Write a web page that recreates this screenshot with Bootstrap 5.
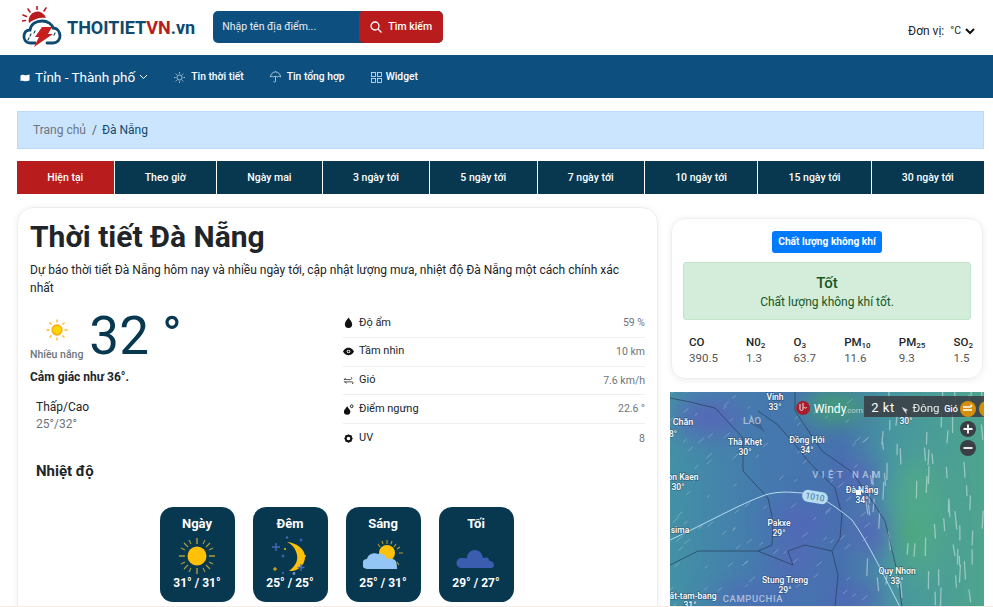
<!DOCTYPE html>
<html lang="vi">
<head>
  <meta charset="UTF-8">
  <meta name="viewport" content="width=device-width, initial-scale=1.0">
  <title>Thời tiết Đà Nẵng</title>
  <link rel="stylesheet" href="https://cdn.jsdelivr.net/npm/bootstrap@5.3.0/dist/css/bootstrap.min.css">
  <style>
    html, body { height: 100%; overflow: hidden; }
    body { font-family: Roboto, "Liberation Sans", sans-serif; font-size: 12px; color: #212529; background: #fff; }
    .top-head { height: 55px; padding: 6px 18px 0 22px; }
    .logo-text { font-size: 18px; font-weight: 700; color: #0e4a6e; margin-left: 5px; }
    .logo-text span { color: #b91c1c; }
    .search-box { width: 230px; height: 32px; margin: 5px 0 0 18px; border-radius: 5px; overflow: hidden; background: #0d5080; }
    .search-box input { flex: 1; min-width: 0; border: 0; background: transparent; padding: 0 9px; color: #fff; font-size: 10.5px; outline: 0; }
    .search-box input::placeholder { color: #e8eef3; opacity: 1; }
    .search-btn { width: 84px; background: #b91c1c; color: #fff; border: 0; font-size: 10.5px; font-weight: 500; border-radius: 5px; padding: 0; gap: 6px; }
    .unit-pick { font-size: 12px; margin-top: 16px; }
    .unit-pick .unit-val { font-size: 10.5px; margin-left: 6px; }
    .main-nav { background: #0d5080; height: 43px; padding: 1px 0 0 20px; }
    .main-nav a { color: #fff; text-decoration: none; font-size: 10.3px; font-weight: 500; }
    .main-nav .city-link { font-size: 13.5px; font-weight: 400; margin-right: 26px; }
    .main-nav .city-name { margin-left: 5px; }
    .main-nav .nav-gap { margin-right: 26px; }
    .main-nav .nav-ico { margin-right: 6px; }
    .crumb-bar { margin: 13px 9px 0 17px; height: 38px; background: #cce5ff; border: 1px solid #b8daff; padding: 0 15px; font-size: 12px; }
    .crumb-bar .breadcrumb-item a { color: #6c757d; text-decoration: none; }
    .crumb-bar .breadcrumb-item.active { color: #0e4a6e; }
    .crumb-bar .breadcrumb-item + .breadcrumb-item { padding-left: 6px; }
    .crumb-bar .breadcrumb-item + .breadcrumb-item::before { padding-right: 5px; }
    .day-tabs { margin: 12px 9px 0 17px; gap: 1px; height: 33px; }
    .day-tabs a { background: #07384f; color: #fff; text-decoration: none; font-size: 10.5px; font-weight: 500; flex: 1 1 auto; text-align: center; line-height: 33px; }
    .day-tabs a.on { background: #b91c1c; }
    .page-cols { margin: 13px 9px 0 17px; gap: 12px; align-items: flex-start; }
    .left-panel { width: 641px; flex: none; height: 500px; border: 1px solid #ededed; border-radius: 16px; padding: 12px; box-shadow: 0 0 6px rgba(0,0,0,.06); }
    .left-panel h1 { font-size: 30px; font-weight: 700; margin: 0; line-height: 34px; }
    .intro { font-size: 12px; line-height: 18px; margin: 7px 0 0; }
    .now-wrap { margin-top: 12px; }
    .now-col { width: 313px; flex: none; }
    .sun-now { margin-top: 9px; }
    .sky-name { font-size: 10.5px; font-weight: 500; color: #6c757d; line-height: 13px; margin-top: 6px; }
    .big-temp { font-size: 53px; line-height: 54px; color: #07384f; margin: 0 0 0 6px; }
    .feels { font-size: 12px; font-weight: 700; margin-top: 5px; }
    .low-high { margin: 13px 0 0 6px; font-size: 12px; line-height: 17px; }
    .low-high div + div { color: #6c757d; }
    .stat-list { width: 302px; }
    .stat-row { height: 28.75px; border-bottom: 1px solid #eee; font-size: 11px; }
    .stat-row:last-child { border-bottom: 0; }
    .stat-row svg { width: 11px; height: 11px; margin-right: 5px; }
    .stat-row .stat-val { color: #6c757d; font-size: 10.5px; }
    .temp-title { font-size: 15px; font-weight: 700; margin: 9px 0 0 6px; line-height: 18px; }
    .temp-wrap { gap: 18px; margin-top: 27px; padding-right: 2px; }
    .temp-box { width: 75px; height: 95px; background: #07384f; border-radius: 13px; color: #fff; font-weight: 700; font-size: 12px; padding-top: 7px; }
    .temp-box .temp-name { font-size: 13px; }
    .temp-box svg { width: 40px; height: 40px; display: block; margin: 3px auto -2px; }
    .right-col { width: 314px; flex: none; padding-top: 11px; }
    .air-box { margin: 0 1px; height: 161px; border: 1px solid #eee; border-radius: 14px; padding: 12px 11px; box-shadow: 0 1px 6px rgba(0,0,0,.08); }
    .air-tag { background: #007bff; font-size: 10.2px; font-weight: 700; border-radius: 3px; padding: 5px 6px; line-height: 12px; }
    .air-alert { background: #d4edda; border: 1px solid #c3e6cb; color: #155724; height: 58px; margin: 9px 0 0; padding: 10px 0 0; border-radius: 3px; font-size: 12px; line-height: 18px; }
    .air-alert b { display: block; font-size: 15px; font-weight: 500; line-height: 20px; }
    .air-nums { margin-top: 14px; padding: 0 0 0 6px; margin-right: -2px; justify-content: space-between; font-size: 11.5px; line-height: 16px; }
    .air-nums b { display: block; font-weight: 500; }
    .air-nums sub { font-size: 8px; bottom: -.3em; }
    .air-nums span { color: #555; }
    .wind-map { display: block; width: 314px; height: 215px; margin-top: 13px; }
    .wind-map text { font-family: Roboto, "Liberation Sans", sans-serif; font-size: 8.5px; font-weight: 500; fill: #fff; text-anchor: middle; paint-order: stroke; stroke: rgba(30,50,80,.4); stroke-width: 1.5px; }
    .wind-map .bar-text { stroke: none; font-weight: 400; }
    .wind-map .land-text { font-size: 9.5px; stroke: none; fill: rgba(255,255,255,.55); }
    .foot-strip { position: fixed; left: 0; right: 0; bottom: 0; height: 1px; background: #f7ebe6; }
  </style>
</head>
<body>
  <header class="top-head d-flex align-items-start">
    <div class="d-flex align-items-center">
      <svg width="40" height="42" viewBox="0 0 40 42" fill="none">
        <path d="M7 17A8.500 8.500 0 1 1 24 12C18 11 12 13 7 17Z" fill="#b91c1c"/>
        <path d="M15 0v3.500M6 3l2 3M24 2l-2 3M1 9l3.500 1.500M0 15l3.500-.5" stroke="#b91c1c" stroke-width="1.600" stroke-linecap="round"/>
        <path d="M13 37H8C3.500 37 1.500 33 2 29.500 2.500 26 5 24 8 24 9 18 14 15 20 15 26 15 30 18.500 31 22 35.500 22 38 26 38 30 38 34 35 37 31 37H25" stroke="#0e4a6e" stroke-width="2.800" stroke-linecap="round"/>
        <path d="M20 21h10l-4 7h5L12 41l5-10h-4z" fill="#c81e1e"/>
        <path d="M9 28l-1 2M13 25l-1 2M7 32l-1 2M33 27l-1 2" stroke="#0e4a6e" stroke-width="1.200" stroke-linecap="round"/>
      </svg>
      <span class="logo-text">THOITIET<span>VN</span>.vn</span>
    </div>
    <form class="search-box d-flex">
      <input type="text" placeholder="Nhập tên địa điểm...">
      <button type="button" class="search-btn d-flex align-items-center justify-content-center">
        <svg width="12" height="12" viewBox="0 0 12 12" fill="none" stroke="#fff" stroke-width="1.300"><circle cx="5" cy="5" r="4"/><path d="M8 8l3.500 3.500"/></svg>
        Tìm kiếm
      </button>
    </form>
    <div class="unit-pick ms-auto d-flex align-items-center">
      <span>Đơn vị:</span><span class="unit-val">°C</span>
      <svg class="ms-1" width="10" height="8" viewBox="0 0 10 8" fill="none" stroke="#111" stroke-width="2"><path d="M1 2l4 4 4-4"/></svg>
    </div>
  </header>

  <nav class="main-nav d-flex align-items-center">
    <a href="#" class="city-link d-flex align-items-center">
      <svg width="10" height="9" viewBox="0 0 10 9"><path d="M.5 2.500C2 1.500 3 1.500 4 2c2 .5 3 0 5.500-.5v6C7.500 8 6 8.500 4 8c-1.500-.5-2.500-.5-3.500 0z" fill="#fff"/></svg>
      <span class="city-name">Tỉnh - Thành phố</span>
      <svg class="ms-1" width="9" height="6" viewBox="0 0 9 6" fill="none" stroke="#fff"><path d="M1 1l3.500 3.500L8 1"/></svg>
    </a>
    <a href="#" class="nav-gap d-flex align-items-center">
      <svg class="nav-ico" width="11" height="11" viewBox="0 0 12 12" fill="none" stroke="#dfe8ee" stroke-width=".8"><circle cx="6" cy="6" r="2.800"/><path d="M6 0v1.700M6 10.300V12M0 6h1.700M10.300 6H12M1.800 1.800L3 3M9 9l1.200 1.200M10.200 1.800L9 3M3 9l-1.200 1.200"/></svg>
      Tin thời tiết
    </a>
    <a href="#" class="nav-gap d-flex align-items-center">
      <svg class="nav-ico" width="11" height="12" viewBox="0 0 12 13" fill="none" stroke="#dfe8ee" stroke-width=".8"><path d="M.5 6.500A5.500 5.500 0 0 1 11.500 6.500C10 5.500 9 5.500 8 6.500 7 5.500 5 5.500 4 6.500 3 5.500 2 5.500.5 6.500zM6 6v5c0 1.500-2 1.500-2 .3M6 .2V1"/></svg>
      Tin tổng hợp
    </a>
    <a href="#" class="d-flex align-items-center">
      <svg class="me-1" width="11" height="11" viewBox="0 0 11 11" fill="none" stroke="#dfe8ee" stroke-width=".8"><rect x=".5" y=".5" width="4" height="4"/><rect x="6.500" y=".5" width="4" height="4"/><rect x=".5" y="6.500" width="4" height="4"/><rect x="6.500" y="6.500" width="4" height="4"/></svg>
      Widget
    </a>
  </nav>

  <div class="crumb-bar d-flex align-items-center">
    <ol class="breadcrumb mb-0">
      <li class="breadcrumb-item"><a href="#">Trang chủ</a></li>
      <li class="breadcrumb-item active">Đà Nẵng</li>
    </ol>
  </div>

  <div class="day-tabs d-flex">
    <a href="#" class="on">Hiện tại</a>
    <a href="#">Theo giờ</a>
    <a href="#">Ngày mai</a>
    <a href="#">3 ngày tới</a>
    <a href="#">5 ngày tới</a>
    <a href="#">7 ngày tới</a>
    <a href="#">10 ngày tới</a>
    <a href="#">15 ngày tới</a>
    <a href="#">30 ngày tới</a>
  </div>

  <div class="page-cols d-flex">
    <section class="left-panel">
      <h1>Thời tiết Đà Nẵng</h1>
      <p class="intro">Dự báo thời tiết Đà Nẵng hôm nay và nhiều ngày tới, cập nhật lượng mưa, nhiệt độ Đà Nẵng một cách chính xác nhất</p>
      <div class="now-wrap d-flex">
        <div class="now-col">
          <div class="d-flex align-items-start">
            <div class="text-center">
              <svg class="sun-now d-block mx-auto" width="24" height="24" viewBox="0 0 24 24" fill="none" stroke="#fcb913" stroke-width="1.300"><circle cx="12" cy="12" r="5" fill="#ffd400" stroke="#fca913"/><path d="M12 1.500v3M12 19.500v3M1.500 12h3M19.500 12h3M4.500 4.500l2 2M17.500 17.500l2 2M19.500 4.500l-2 2M6.500 17.500l-2 2"/></svg>
              <div class="sky-name">Nhiều nắng</div>
            </div>
            <div class="big-temp">32 °</div>
          </div>
          <div class="feels">Cảm giác như 36°.</div>
          <div class="low-high"><div>Thấp/Cao</div><div>25°/32°</div></div>
        </div>
        <div class="stat-list">
          <div class="stat-row d-flex align-items-center justify-content-between">
            <span class="d-flex align-items-center"><svg viewBox="0 0 12 12"><path d="M6 .5C8 3.500 10 5.500 10 8A4 4 0 0 1 2 8C2 5.500 4 3.500 6 .5z" fill="#111"/></svg>Độ ẩm</span><span class="stat-val">59 %</span>
          </div>
          <div class="stat-row d-flex align-items-center justify-content-between">
            <span class="d-flex align-items-center"><svg viewBox="0 0 12 12"><path d="M0 6C2 2.500 4 2 6 2s4 .5 6 4c-2 3.500-4 4-6 4S2 9.500 0 6z" fill="#111"/><circle cx="6" cy="6" r="2" fill="#fff"/><circle cx="6" cy="6" r="1.100" fill="#111"/></svg>Tầm nhìn</span><span class="stat-val">10 km</span>
          </div>
          <div class="stat-row d-flex align-items-center justify-content-between">
            <span class="d-flex align-items-center"><svg viewBox="0 0 12 12" fill="none" stroke="#333"><path d="M1 5h7c2 0 2-2.500.5-2.500M1 7.500h9c1.500 0 1.500 2-.2 2M3 3.500l-2 1.500M4 9l-2-1.500" stroke-width=".9"/></svg>Gió</span><span class="stat-val">7.6 km/h</span>
          </div>
          <div class="stat-row d-flex align-items-center justify-content-between">
            <span class="d-flex align-items-center"><svg viewBox="0 0 12 12"><path d="M4.500 2.500C6 5 8 6.500 8 8.200a3.500 3.500 0 0 1-7 0C1 6.500 3 5 4.500 2.500z" fill="#111"/><circle cx="9.500" cy="2.500" r="1.500" fill="none" stroke="#111"/></svg>Điểm ngưng</span><span class="stat-val">22.6 °</span>
          </div>
          <div class="stat-row d-flex align-items-center justify-content-between">
            <span class="d-flex align-items-center"><svg viewBox="0 0 12 12"><circle cx="6" cy="6" r="3" fill="none" stroke="#111" stroke-width="2"/><path d="M6 1.500v1.500M6 9v1.500M1.500 6H3M9 6h1.500M2.800 2.800l1 1M8.200 8.200l1 1M9.200 2.800l-1 1M3.800 8.200l-1 1" stroke="#111" stroke-width="1.400"/></svg>UV</span><span class="stat-val">8</span>
          </div>
        </div>
      </div>
      <h2 class="temp-title">Nhiệt độ</h2>
      <div class="temp-wrap d-flex justify-content-center">
        <div class="temp-box text-center">
          <div class="temp-name">Ngày</div>
          <svg viewBox="0 0 40 40" fill="none"><circle cx="20" cy="20" r="9.500" fill="#ffc107"/><path d="M20 2v6M20 32v6M2 20h6M32 20h6" stroke="#b09a3c" stroke-width="1.400"/><path d="M7 7l4 4M29 29l4 4M33 7l-4 4M11 29l-4 4M12 4l2 4M26 32l2 4M28 4l-2 4M14 32l-2 4M4 12l4 2M32 26l4 2M36 12l-4 2M8 26l-4 2" stroke="#b09a3c" stroke-width="1.100"/></svg>
          <div>31° / 31°</div>
        </div>
        <div class="temp-box text-center">
          <div class="temp-name">Đêm</div>
          <svg viewBox="0 0 40 40"><path d="M17 6C27 7 35 13 35 21S28 36 19 35C26 30 28 24 27 19 26 13 22 8 17 6z" fill="#ffc107"/><path d="M6 7v8M2 11h8M31 28v7M27.500 31.500h7" stroke="#4868b8" stroke-width="1.400"/><path d="M5 31v4M3 33h4" stroke="#ffc107"/><circle cx="17" cy="1.500" r="1.200" fill="#4868b8"/><circle cx="31" cy="4" r="1.500" fill="#3d5fb0"/><circle cx="13" cy="20" r="1.500" fill="#3d5fb0"/><circle cx="15" cy="13" r="1" fill="#ffc107"/><circle cx="35" cy="20" r="1" fill="#ffc107"/><circle cx="13" cy="37" r="1.200" fill="#3d5fb0"/><circle cx="24" cy="37.500" r="1.400" fill="#6d8fd0"/></svg>
          <div>25° / 25°</div>
        </div>
        <div class="temp-box text-center">
          <div class="temp-name">Sáng</div>
          <svg viewBox="0 0 40 40" fill="none"><circle cx="24" cy="17" r="8" fill="#ffc107"/><path d="M24 4v4M36 17h4M33 8l-2 3M15 8l2 3M19 5l1 3M29 5l-1 3M37 11l-3 2M34 26l2 3" stroke="#b09a3c" stroke-width="1.100"/><path d="M4 33a5 5 0 0 1 0-10c1-5 7-7 11-5 3-1 8 0 9 5 3-.5 6-.5 8 1 2 2 2 7 2 9z" fill="#93c5f5"/></svg>
          <div>25° / 31°</div>
        </div>
        <div class="temp-box text-center">
          <div class="temp-name">Tối</div>
          <svg viewBox="0 0 40 40"><path d="M6 32a5 5 0 0 1-1-10c3 0 5 .5 6 0 0-4 3-8 8-8s7 4 8 8c2 0 3-1 5 0 1 1 1 3 2 3 2 0 4 2 4 4 0 2-1 3-3 3z" fill="#3a5db0"/></svg>
          <div>29° / 27°</div>
        </div>
      </div>
    </section>

    <aside class="right-col">
      <div class="air-box">
        <div class="text-center"><span class="badge air-tag">Chất lượng không khí</span></div>
        <div class="alert air-alert text-center"><b>Tốt</b>Chất lượng không khí tốt.</div>
        <div class="air-nums d-flex">
          <div><b>CO</b><span>390.5</span></div>
          <div><b>N0<sub>2</sub></b><span>1.3</span></div>
          <div><b>O<sub>3</sub></b><span>63.7</span></div>
          <div><b>PM<sub>10</sub></b><span>11.6</span></div>
          <div><b>PM<sub>25</sub></b><span>9.3</span></div>
          <div><b>SO<sub>2</sub></b><span>1.5</span></div>
        </div>
      </div>
      <svg class="wind-map" viewBox="0 0 314 215">
        <defs>
          <linearGradient id="seaGrad" x1="0" y1="0" x2="1" y2="0"><stop offset="0" stop-color="#4391a6"/><stop offset=".3" stop-color="#4579ae"/><stop offset=".55" stop-color="#4671ae"/><stop offset=".7" stop-color="#4796a0"/><stop offset="1" stop-color="#4ea48e"/></linearGradient>
          <filter id="softBlur" x="-50%" y="-50%" width="200%" height="200%"><feGaussianBlur stdDeviation="12"/></filter>
          <clipPath id="mapClip"><rect width="314" height="215"/></clipPath>
        </defs>
        <g clip-path="url(#mapClip)">
          <rect width="314" height="215" fill="url(#seaGrad)"/>
          <g filter="url(#softBlur)">
            <ellipse cx="40" cy="25" rx="35" ry="20" fill="#5568b8"/>
            <ellipse cx="165" cy="15" rx="30" ry="15" fill="#43a56e"/>
            <ellipse cx="250" cy="125" rx="26" ry="60" fill="#4fa78a"/>
            <ellipse cx="188" cy="85" rx="20" ry="16" fill="#5566b8"/>
            <ellipse cx="200" cy="140" rx="18" ry="26" fill="#5566b8"/>
            <ellipse cx="130" cy="130" rx="30" ry="20" fill="#5168b8"/>
            <ellipse cx="125" cy="170" rx="24" ry="14" fill="#5568b8"/>
            <ellipse cx="85" cy="205" rx="45" ry="12" fill="#4d6ab6"/>
            <ellipse cx="185" cy="205" rx="30" ry="12" fill="#5266b8"/>
            <ellipse cx="238" cy="142" rx="9" ry="12" fill="#48a868"/>
          </g>
          <g id="windLines" stroke="#fff" fill="none" stroke-linecap="round"></g>
          <g fill="none" stroke="#263650" stroke-width=".9" stroke-opacity=".7">
            <path d="M125 0V19L152 59 182 80 202 109 215 129 228 183 232 215"/>
            <path d="M88 19L108 33 128 56 138 69 155 86 165 96 172 123 170 146 162 159 135 153 118 159 123 173 88 159 28 159 0 173"/>
            <path d="M0 6L20 10 45 16 73 46V79L98 106 103 129 102 153 88 159M162 159L168 183 165 215"/>
          </g>
          <path d="M78 30l10 6 7 4-7-12z" fill="#3b5780" opacity=".6"/>
          <path d="M0 148C35 132 70 112 95 103 108 99 120 100 132 101 145 102 158 108 182 128 198 150 215 186 230 215" fill="none" stroke="#b8dcf0" stroke-width="1"/>
          <g transform="rotate(10 145 105)"><rect x="132" y="99" width="26" height="12" rx="6" fill="#b8dcf0"/><text x="145" y="108" class="bar-text" style="fill:#44709f">1010</text></g>
          <text x="105" y="8">Vinh</text><text x="105" y="18">33°</text>
          <text x="82" y="32" class="land-text">LÀO</text>
          <text x="13" y="33" style="font-size:9px">Chăn</text><text x="3" y="45">8°</text>
          <text x="75" y="53">Thà Khẹt</text><text x="75" y="63">30°</text>
          <text x="137" y="51">Đồng Hới</text><text x="137" y="61">34°</text>
          <text x="178" y="86" class="land-text" style="letter-spacing:3.500px">VIỆT NAM</text>
          <text x="13" y="88">on Kaen</text><text x="8" y="98">30°</text>
          <text x="192" y="101">Đà Nẵng</text><text x="192" y="111">34°</text>
          <text x="10" y="141">sima</text>
          <text x="109" y="134">Pakxe</text><text x="109" y="144">29°</text>
          <text x="115" y="191">Stung Treng</text><text x="115" y="201">29°</text>
          <text x="227" y="182">Quy Nhơn</text><text x="227" y="192">33°</text>
          <text x="23" y="207">ất-tam-bang</text><text x="20" y="216">31°</text>
          <text x="83" y="210" class="land-text" style="letter-spacing:.6px">CAMPUCHIA</text>
          <text x="236" y="32">30°</text>
          <circle cx="133" cy="16" r="7" fill="#a81d2c"/>
          <path d="M130 12v5c0 2 3 2 3 0v-6M134 15c1 2 2 1 3 0" stroke="#fff" stroke-width=".9" fill="none"/>
          <text x="160" y="21" class="bar-text" style="font-size:12px">Windy</text>
          <text x="184" y="21" class="bar-text" style="font-size:8px;opacity:.6">.com</text>
          <rect x="194" y="4" width="120" height="21" fill="#3a3f45" opacity=".88"/>
          <text x="213" y="20" class="bar-text" style="font-size:13px;letter-spacing:.5px">2 kt</text>
          <path d="M232 15l6 3-2 1 1 3-3-3z" fill="#ddd"/>
          <text x="256" y="20" class="bar-text" style="font-size:11.500px;opacity:.9">Đông</text>
          <text x="281" y="20" class="bar-text" style="font-size:9px;font-weight:500">Gió</text>
          <circle cx="298" cy="17" r="8" fill="#d4900d"/><path d="M293 15h7c2 0 2-2 .5-2M293 18h9" stroke="#fff" stroke-width="1.500" fill="none"/>
          <circle cx="317" cy="17" r="8" fill="#d4900d"/>
          <circle cx="298" cy="37" r="8" fill="#3a3f45"/><path d="M293.500 37h9M298 32.500v9" stroke="#fff" stroke-width="1.800"/>
          <circle cx="298" cy="56" r="8" fill="#3a3f45"/><path d="M293.500 56h9" stroke="#fff" stroke-width="1.800"/>
          <rect x="186" y="98" width="5" height="5" fill="#fff"/>
        </g>
      </svg>
    </aside>
  </div>
  <div class="foot-strip"></div>

  <script>
    // wind streaks over the map, fixed seed so every load looks the same
    var seed = 7;
    function rnd() { seed = (seed * 16807) % 2147483647; return seed / 2147483647; }
    var d = '', dBright = '';
    for (var i = 0; i < 170; i++) {
      var x = rnd() * 314, y = rnd() * 215;
      var sea = x > 195;
      var len = sea ? 8 + rnd() * 10 : 3 + rnd() * 5;
      var seg = 'M' + x.toFixed(1) + ' ' + y.toFixed(1) + 'l' + (sea ? (rnd() - 0.6) * 3 : len * 0.7).toFixed(1) + ' ' + (-len * (sea ? 1 : 0.6)).toFixed(1);
      if (sea) dBright += seg; else d += seg;
    }
    document.getElementById('windLines').innerHTML = '<path d="' + d + '" stroke-opacity=".25" stroke-width="1"/><path d="' + dBright + '" stroke-opacity=".42" stroke-width="1.300"/>';
  </script>
  <script src="https://cdn.jsdelivr.net/npm/bootstrap@5.3.0/dist/js/bootstrap.bundle.min.js"></script>
</body>
</html>
